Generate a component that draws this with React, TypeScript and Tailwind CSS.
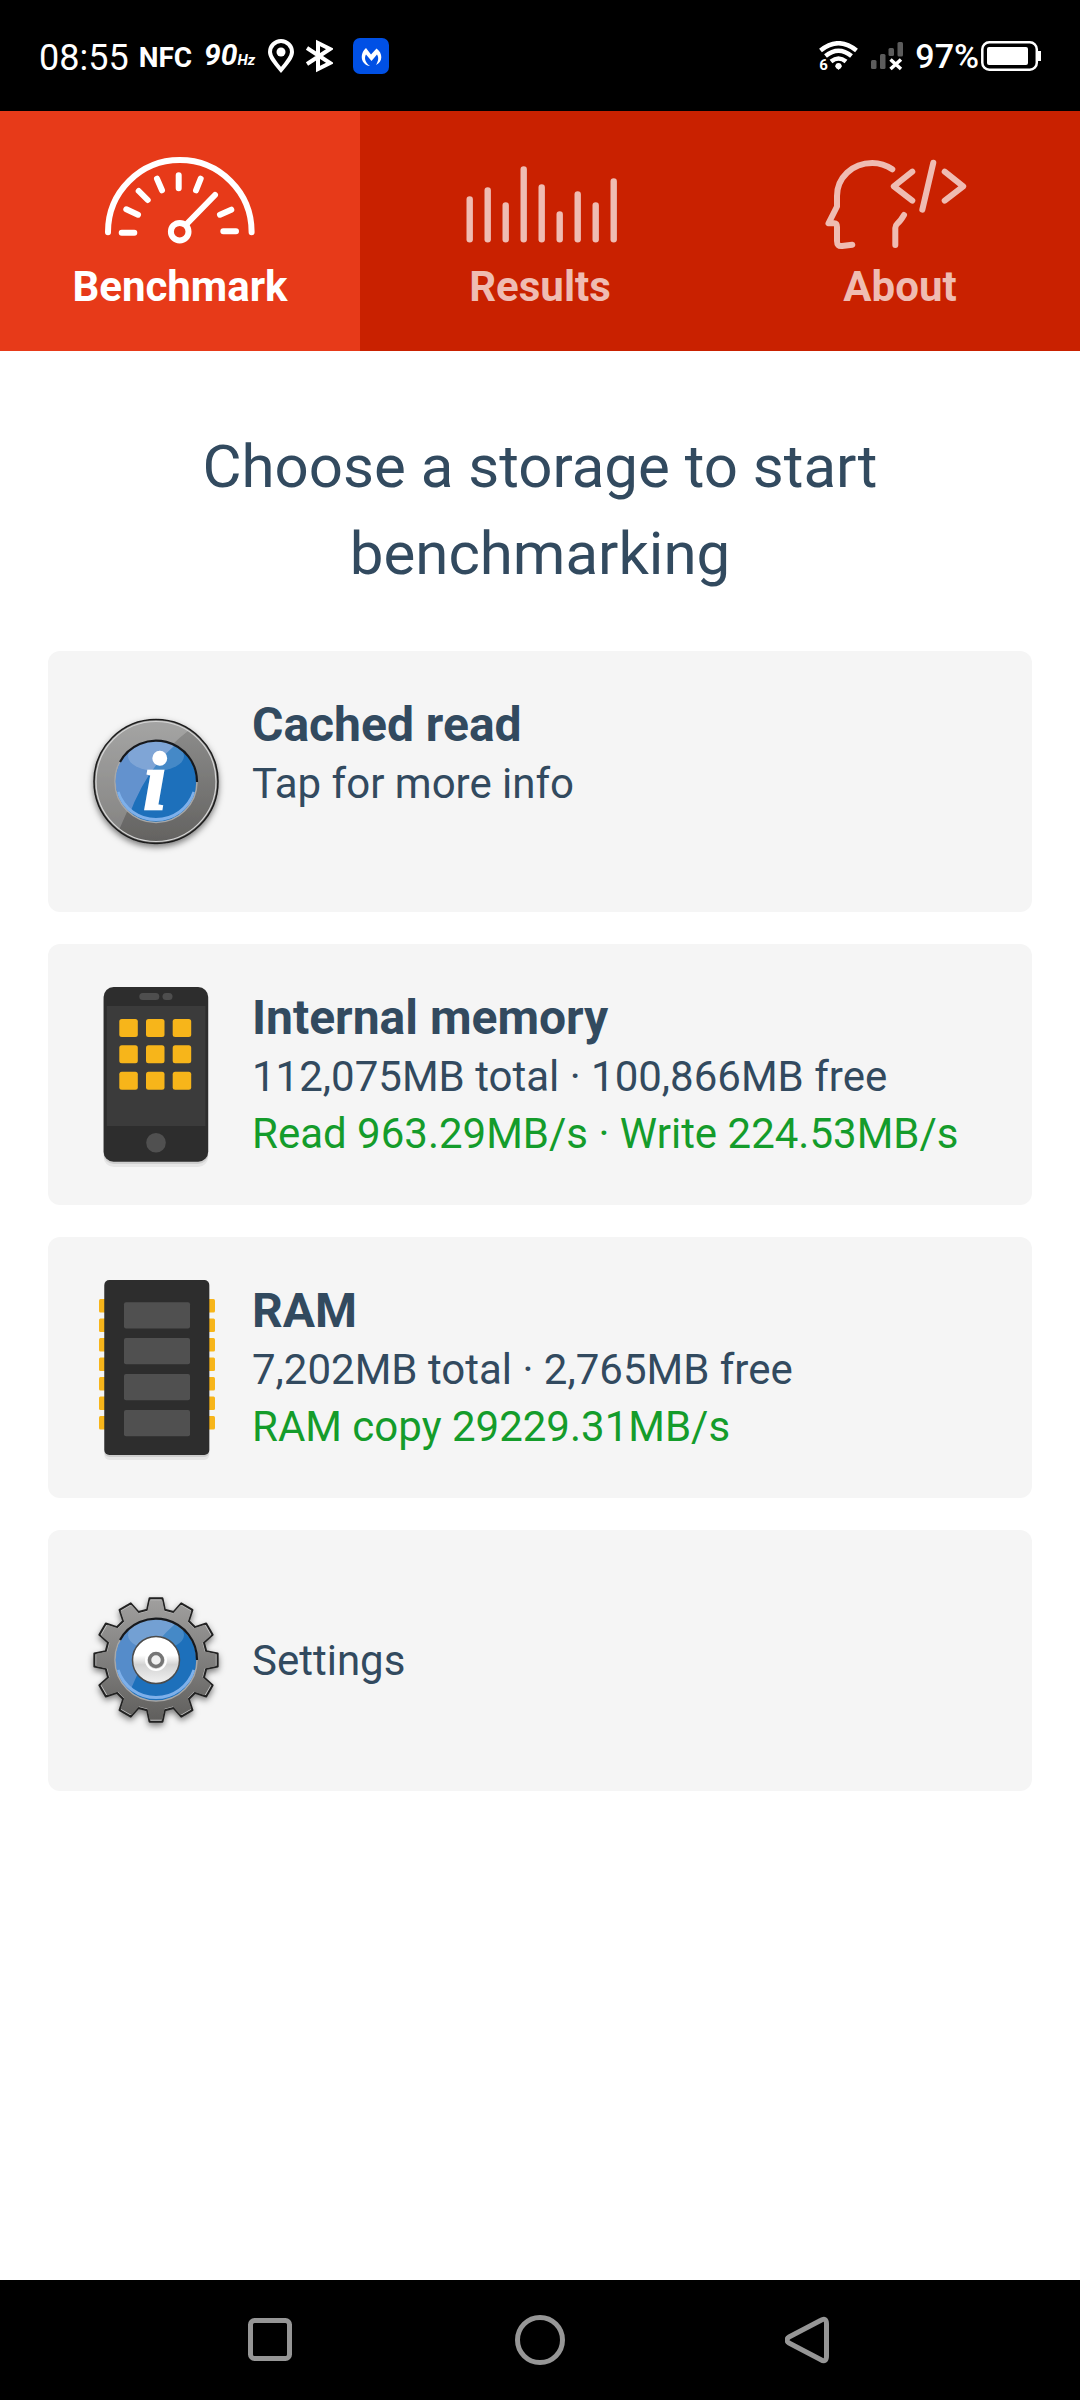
import type { ReactNode } from "react";
import clsx from "clsx";

const bars = [46, 37, 52, 16, 34, 61, 41, 52, 28];
const teeth = Array.from({ length: 12 }, (_, i) => i * 30);

// Outline of the gear, one tooth every 30 degrees
const gearPath =
  teeth
    .map((deg, i) => {
      const at = (r: number, offset: number) => {
        const a = ((deg + offset - 90) * Math.PI) / 180;
        return `${(72 + r * Math.cos(a)).toFixed(2)} ${(95 + r * Math.sin(a)).toFixed(2)}`;
      };
      return `${i === 0 ? "M" : "L"}${at(51, -10)} L${at(62, -6)} L${at(62, 6)} L${at(51, 10)}`;
    })
    .join(" ") + " Z";

function GaugeIcon() {
  return (
    <svg className="w-[180px] h-[100px]" viewBox="0 0 180 100" fill="none" stroke="currentColor" strokeWidth="6" strokeLinecap="round" aria-hidden="true">
      <path d="M18 82.3V81.8A71.8 71.8 0 0 1 161.6 81.8V82.3" />
      <path d="M31.7 82.7H44.3M133.3 81.3H146M36.3 59.3L48 64.7M48.7 41L57.7 50M67 28.7L72 40.3M88.7 25.3V38.3M110.7 28.7L106 40.3M141.3 59.7L130 64.7" />
      <path d="M125 45L96.7 74" />
      <circle cx="89.7" cy="81.7" r="8.8" />
    </svg>
  );
}

function BarsIcon() {
  return (
    <svg className="w-[180px] h-[100px]" viewBox="0 0 180 100" stroke="currentColor" strokeWidth="6.4" strokeLinecap="round" aria-hidden="true">
      {bars.map((top, i) => (
        <line key={i} x1={19.7 + i * 18} x2={19.7 + i * 18} y1={top + 3.4} y2="89.2" />
      ))}
    </svg>
  );
}

function HeadCodeIcon() {
  return (
    <svg className="w-[180px] h-[100px]" viewBox="0 0 180 100" fill="none" stroke="currentColor" strokeWidth="6" strokeLinecap="round" strokeLinejoin="round" aria-hidden="true">
      <path d="M82.3 19.3C76 15 70 13 62.3 13C42 13 27 28 27 46V56.5L18.5 73.3H24Q27 73.5 27 77V91Q27 96.6 32 96L42.3 94.7" />
      <path d="M94 65Q90.5 71 87.5 73.5Q85.3 75.5 85.3 78V95" />
      <path d="M102.3 21.7L83.8 36.3L102.3 50.7M123.3 12.7L112.3 59.7M134.7 21.7L153.2 36.3L134.7 50.7" />
    </svg>
  );
}

function InfoIcon() {
  return (
    <svg className="w-36 h-48 shrink-0" viewBox="0 0 144 192" aria-hidden="true">
      <defs>
        <linearGradient id="info-ring" x1="0" y1="0" x2="0" y2="1">
          <stop offset="0" stopColor="#8f8f8e" />
          <stop offset="1" stopColor="#636260" />
        </linearGradient>
        <filter id="info-shadow" x="-20%" y="-20%" width="140%" height="140%">
          <feDropShadow dx="0" dy="3" stdDeviation="3" floodColor="#000" floodOpacity="0.5" />
        </filter>
        <clipPath id="info-disc"><circle cx="72" cy="95.5" r="61" /></clipPath>
        <clipPath id="info-blue"><circle cx="72" cy="95.5" r="40.5" /></clipPath>
      </defs>
      <circle cx="72" cy="95.5" r="62" fill="url(#info-ring)" stroke="#1c1c1c" strokeWidth="1.5" filter="url(#info-shadow)" />
      <path d="M104 45Q63 76 35 144L0 144V20H104Z" fill="#fff" opacity="0.2" clipPath="url(#info-disc)" />
      <circle cx="72" cy="95.5" r="60" fill="none" stroke="#d5d5d5" strokeWidth="1.2" />
      <circle cx="72" cy="95.5" r="41" fill="#1d70bb" stroke="#a8a8a8" strokeWidth="1.5" />
      <g clipPath="url(#info-blue)">
        <path d="M90 60Q61 85 44 132L20 132V40H100Z" fill="#7b9ed4" opacity="0.75" />
        <ellipse cx="72" cy="70" rx="28" ry="15" fill="#fff" opacity="0.18" />
        <path d="M34 106A40 40 0 0 0 110 106" fill="none" stroke="#7eb0ea" strokeWidth="3" />
      </g>
      <path d="M36 76A41 41 0 0 1 113 96" fill="none" stroke="#16181c" strokeWidth="2.2" />
      <text x="71" y="123" textAnchor="middle" fill="#fff" stroke="#fff" strokeWidth="2.5" fontSize="82" fontWeight="700" fontStyle="italic" fontFamily="Liberation Serif, serif">i</text>
    </svg>
  );
}

function PhoneIcon() {
  return (
    <svg className="w-36 h-48 shrink-0" viewBox="0 0 144 192" aria-hidden="true">
      <rect x="19.6" y="12" width="104.6" height="176" rx="10" fill="#000" opacity="0.06" />
      <rect x="19.6" y="10" width="104.6" height="175" rx="10" fill="#000" opacity="0.1" />
      <rect x="19.6" y="8" width="104.6" height="174.7" rx="10" fill="#2d2d2d" />
      <rect x="22.8" y="27" width="98.6" height="120" fill="#3b3b3b" />
      <rect x="55.3" y="14" width="20" height="7" rx="3.5" fill="#4e4e4e" />
      <rect x="78.5" y="14" width="10" height="7" rx="3.5" fill="#4e4e4e" />
      <circle cx="72" cy="163.7" r="9.8" fill="#505050" />
      {[40, 66.3, 92.7].map((y) =>
        [35.3, 62, 88.7].map((x) => <rect key={`${x}-${y}`} x={x} y={y} width="18.5" height="18" rx="2.5" fill="#f7b51a" />)
      )}
    </svg>
  );
}

function RamIcon() {
  return (
    <svg className="w-36 h-48 shrink-0" viewBox="0 0 144 192" aria-hidden="true">
      {[0, 1, 2, 3, 4, 5, 6].map((i) => (
        <g key={i} fill="#f7b51a">
          <rect x="15" y={27 + i * 19.5} width="8" height="13.5" rx="1.5" />
          <rect x="123" y={27 + i * 19.5} width="8" height="13.5" rx="1.5" />
        </g>
      ))}
      <rect x="20.3" y="12" width="105" height="176" rx="5" fill="#000" opacity="0.06" />
      <rect x="20.3" y="10" width="105" height="175" rx="5" fill="#000" opacity="0.1" />
      <rect x="20.3" y="8" width="105" height="175" rx="5" fill="#2d2d2d" />
      {[30.3, 66, 102, 138].map((y) => (
        <rect key={y} x="40" y={y} width="66" height="26.3" rx="2" fill="#505050" />
      ))}
    </svg>
  );
}

function GearIcon() {
  return (
    <svg className="w-36 h-48 shrink-0" viewBox="0 0 144 192" aria-hidden="true">
      <defs>
        <linearGradient id="gear-metal" x1="0" y1="0" x2="0" y2="1">
          <stop offset="0" stopColor="#a09f9e" />
          <stop offset="1" stopColor="#605f5d" />
        </linearGradient>
        <linearGradient id="gear-hub" x1="0" y1="0" x2="0" y2="1">
          <stop offset="0.4" stopColor="#fff" />
          <stop offset="0.6" stopColor="#d2d2d2" />
          <stop offset="1" stopColor="#f2f2f2" />
        </linearGradient>
        <filter id="gear-shadow" x="-20%" y="-20%" width="140%" height="140%">
          <feDropShadow dx="0" dy="3" stdDeviation="3" floodColor="#000" floodOpacity="0.5" />
        </filter>
        <clipPath id="gear-blue"><circle cx="72" cy="95" r="40.5" /></clipPath>
      </defs>
      <path d={gearPath} fill="#c4c4c4" stroke="#242424" strokeWidth="2" strokeLinejoin="round" filter="url(#gear-shadow)" />
      <path d={gearPath} fill="url(#gear-metal)" transform="translate(72 95) scale(0.97) translate(-72 -95)" />
      <circle cx="72" cy="95" r="41" fill="#1d70bb" stroke="#a8a8a8" strokeWidth="1.5" />
      <g clipPath="url(#gear-blue)">
        <path d="M90 60Q61 85 44 132L20 132V40H100Z" fill="#7b9ed4" opacity="0.6" />
        <ellipse cx="72" cy="70" rx="28" ry="15" fill="#fff" opacity="0.18" />
        <path d="M34 105A40 40 0 0 0 110 105" fill="none" stroke="#7eb0ea" strokeWidth="3" />
      </g>
      <path d="M36 75A41 41 0 0 1 113 95" fill="none" stroke="#16181c" strokeWidth="2.2" />
      <circle cx="72" cy="95" r="23.5" fill="url(#gear-hub)" stroke="#4b4b4b" strokeWidth="1.5" />
      <circle cx="72" cy="95" r="10" fill="none" stroke="#fff" strokeWidth="2" />
      <circle cx="72" cy="95" r="6.5" fill="#f0f0f0" stroke="#757575" strokeWidth="3.5" />
    </svg>
  );
}

type TabProps = {
  label: string;
  icon: ReactNode;
  active?: boolean;
};

function Tab({ label, icon, active }: TabProps) {
  return (
    <button
      type="button"
      role="tab"
      aria-selected={!!active}
      className={clsx(
        "flex flex-col items-center gap-2 pt-[39px] pb-9 text-[42px] leading-[57px] font-bold",
        active ? "bg-[#e73a19] text-white" : "text-[#efbcb2]"
      )}
    >
      {icon}
      {label}
    </button>
  );
}

type StorageCardProps = {
  icon: ReactNode;
  title?: string;
  info: string;
  speed?: string;
};

function StorageCard({ icon, title, info, speed }: StorageCardProps) {
  return (
    <button type="button" className="flex items-center w-full h-[261px] gap-6 pl-9 rounded-xl bg-[#f5f5f5] text-left">
      {icon}
      <div className={clsx("text-[42px] leading-[57px]", title && "min-h-[174px]")}>
        {title && <h2 className="text-[48px] leading-[60px] font-bold">{title}</h2>}
        <p>{info}</p>
        {speed && <p className="text-[#149c2b]">{speed}</p>}
      </div>
    </button>
  );
}

function StatusBar() {
  return (
    <header className="flex items-center justify-between h-[111px] px-[39px] bg-black text-white">
      <div className="flex items-center">
        <span className="text-[36px] leading-[42px] pt-1">08:55</span>
        <span className="ml-2.5 pt-1 font-bold text-[28px] leading-[42px]">NFC</span>
        <span className="ml-3 pt-1 font-bold italic text-[30px] leading-[42px]">
          90<span className="text-[15px]">Hz</span>
        </span>
        <svg className="ml-3 w-7 h-9" viewBox="0 0 28 36" fill="none" stroke="#fff" strokeWidth="4" aria-hidden="true">
          <path d="M14 32C8 25 3 19 3 14A11 11 0 0 1 25 14C25 19 20 25 14 32Z" />
          <circle cx="14" cy="14" r="4.5" fill="#fff" stroke="none" />
        </svg>
        <svg className="ml-2.5 w-7 h-9" viewBox="0 0 28 36" fill="none" stroke="#fff" strokeWidth="4" aria-hidden="true">
          <path d="M2 10L25 25L13 31V5L25 11L2 26" />
        </svg>
        <svg className="ml-5 w-9 h-9" viewBox="0 0 36 36" aria-hidden="true">
          <rect width="36" height="36" rx="7" fill="#0050e5" />
          <path d="M13 10L18 16.5L23.5 10.5C30 15 30 24 23 27C26 22 25.5 19 24 16.5L18.5 23L13 16.5C11 20 12 24.5 17 28C8 27 6 16 13 10Z" fill="#fff" />
        </svg>
      </div>
      <div className="flex items-center">
        <div className="relative w-[39px] h-[30px]">
          <svg className="w-[39px] h-[30px]" viewBox="0 0 39 30" fill="none" stroke="#fff" strokeWidth="4.5" aria-hidden="true">
            <path d="M1.5 9.5Q19.5 -5 37.5 9.5M6.5 15Q19.5 4.5 32.5 15M12 20.5Q19.5 14.5 27 20.5" />
            <path d="M16 25Q19.5 21.5 23 25L19.5 29Z" fill="#fff" stroke="none" />
            <circle cx="19.5" cy="25" r="3" fill="#fff" stroke="none" />
          </svg>
          <span className="absolute left-0 bottom-0 text-[15px] leading-[12px] font-bold bg-black">6</span>
        </div>
        <svg className="ml-3 w-[33px] h-[30px]" viewBox="0 0 33 30" aria-hidden="true">
          <g fill="#5c5c5c">
            <rect x="1" y="19" width="5.5" height="9" rx="1.5" />
            <rect x="10" y="13" width="5.5" height="15" rx="1.5" />
            <rect x="18.5" y="7" width="5.5" height="8" rx="1.5" />
            <rect x="27.5" y="1" width="5.5" height="14.5" rx="1.5" />
          </g>
          <path d="M20.5 18.5L31 28M31 18.5L20.5 28" stroke="#fff" strokeWidth="3.5" />
        </svg>
        <span className="mx-3 mr-0.5 text-[34px] leading-[42px] font-medium">97%</span>
        <svg className="w-[60px] h-[30px]" viewBox="0 0 60 30" aria-hidden="true">
          <rect x="1.3" y="1.3" width="54.5" height="27.4" rx="7" fill="none" stroke="#fff" strokeWidth="2.5" />
          <rect x="6" y="6" width="41" height="18" rx="2" fill="#fff" />
          <rect x="57" y="10" width="3" height="10" fill="#fff" />
        </svg>
      </div>
    </header>
  );
}

function NavBar() {
  return (
    <nav className="grid grid-cols-3 items-center h-[120px] px-[12.5%] bg-black text-[#969696]">
      <button type="button" aria-label="Recent apps" className="flex justify-center">
        <svg className="w-[50px] h-[50px]" viewBox="0 0 50 50" fill="none" stroke="currentColor" strokeWidth="5" aria-hidden="true">
          <rect x="5.5" y="5.5" width="39" height="38" rx="4" />
        </svg>
      </button>
      <button type="button" aria-label="Home" className="flex justify-center">
        <svg className="w-[50px] h-[50px]" viewBox="0 0 50 50" fill="none" stroke="currentColor" strokeWidth="5" aria-hidden="true">
          <circle cx="25" cy="25" r="22.5" />
        </svg>
      </button>
      <button type="button" aria-label="Back" className="flex justify-center">
        <svg className="w-[50px] h-[50px]" viewBox="0 0 50 50" fill="none" stroke="currentColor" strokeWidth="5" strokeLinejoin="round" aria-hidden="true">
          <path d="M35.5 5.5Q41.500 2 41.5 9V41Q41.5 48 35.5 44.5L4 28Q0 25 4 22Z" />
        </svg>
      </button>
    </nav>
  );
}

export default function App() {
  return (
    <div className="flex flex-col min-h-screen bg-white font-['Roboto',sans-serif] text-[#324a5f]">
      <StatusBar />
      <div role="tablist" className="grid grid-cols-3 bg-[#c92100]">
        <Tab label="Benchmark" icon={<GaugeIcon />} active />
        <Tab label="Results" icon={<BarsIcon />} />
        <Tab label="About" icon={<HeadCodeIcon />} />
      </div>
      <main className="flex-1 px-12">
        <h1 className="mx-auto max-w-[760px] pt-[72px] pb-[54px] text-center text-[60px] leading-[87px]">
          Choose a storage to start benchmarking
        </h1>
        <div className="flex flex-col gap-8">
          <StorageCard icon={<InfoIcon />} title="Cached read" info="Tap for more info" />
          <StorageCard
            icon={<PhoneIcon />}
            title="Internal memory"
            info="112,075MB total · 100,866MB free"
            speed="Read 963.29MB/s · Write 224.53MB/s"
          />
          <StorageCard icon={<RamIcon />} title="RAM" info="7,202MB total · 2,765MB free" speed="RAM copy 29229.31MB/s" />
          <StorageCard icon={<GearIcon />} info="Settings" />
        </div>
      </main>
      <NavBar />
    </div>
  );
}
